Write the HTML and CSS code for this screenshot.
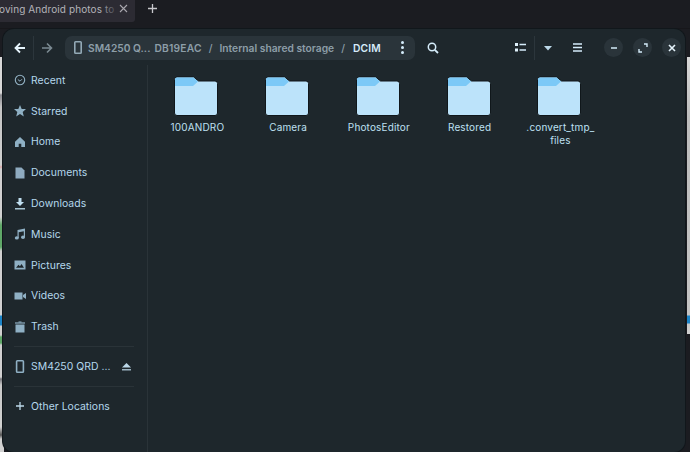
FILE: index.html
```html
<!DOCTYPE html>
<html lang="en">
<head>
<meta charset="utf-8">
<title>Files</title>
<link rel="stylesheet" href="styles.css">
</head>
<body>
<svg class="defs" width="0" height="0" aria-hidden="true">
  <symbol id="folder" viewBox="0.5 0 44 40">
    <path d="M1 3.500Q1 1 3.500 1H20L25 5H41.500Q44 5 44 7.500V37Q44 39.500 41.500 39.500H3.500Q1 39.500 1 37Z" fill="#bce3fa" stroke="#10171b" stroke-width="1"/>
    <path d="M1.500 3.500Q1.500 1.500 3.500 1.500H20L24.500 5.500L19.500 10H1.500Z" fill="#7cc9f7"/>
  </symbol>
</svg>

<div class="tabbar">
  <div class="tab">
    <span class="tab-title">oving Android photos to</span>
    <span class="tab-fade"></span>
    <svg class="tab-x" width="9" height="9" viewBox="0 0 9 9"><path d="M1 1L8 8M8 1L1 8" stroke="#a8a6ad" stroke-width="1.100"/></svg>
  </div>
  <svg class="tab-new" width="11" height="11" viewBox="0 0 11 11"><path d="M5.500 1V10M1 5.500H10" stroke="#c8c8cc" stroke-width="1.300"/></svg>
</div>

<div class="backdrop-left"></div>
<div class="backdrop-right"></div>

<main class="window">
  <header class="header">
    <div class="nav">
      <svg width="12" height="12" viewBox="0 0 12 12"><path d="M6 1.500L1.500 6L6 10.500M2 6H11" fill="none" stroke="#e6f4fc" stroke-width="1.800"/></svg>
      <span class="vsep"></span>
      <svg width="12" height="12" viewBox="0 0 12 12"><path d="M6 1.500L10.500 6L6 10.500M10 6H1" fill="none" stroke="#7b8a92" stroke-width="1.600"/></svg>
    </div>
    <div class="pathbar">
      <svg class="phone" width="8" height="13" viewBox="0 0 8 13"><rect x="0.800" y="0.800" width="6.400" height="11.400" rx="0.800" fill="none" stroke="#93a9b6" stroke-width="1.600"/></svg>
      <span class="crumb c1">SM4250 Q...</span>
      <span class="crumb c2">DB19EAC</span>
      <span class="slash">/</span>
      <span class="crumb">Internal shared storage</span>
      <span class="slash">/</span>
      <span class="crumb current">DCIM</span>
      <span class="dots"><i></i><i></i><i></i></span>
    </div>
    <svg class="search" width="12" height="12" viewBox="0 0 12 12"><circle cx="5" cy="5" r="3.700" fill="none" stroke="#d5ecfa" stroke-width="1.500"/><path d="M7.800 7.800L11 11" stroke="#d5ecfa" stroke-width="1.800"/></svg>
    <svg class="view" width="11" height="9" viewBox="0 0 11 9"><path d="M0 0H3V3H0ZM0 5.500H3V8.500H0Z" fill="#e0f1fb"/><path d="M4.500 1.500H11M4.500 7H11" stroke="#d5ecfa" stroke-width="1.400"/></svg>
    <span class="vsep tall"></span>
    <svg class="caret" width="8" height="5" viewBox="0 0 8 5"><path d="M0 0H8L4 4.500Z" fill="#bcd8e8"/></svg>
    <svg class="menu" width="9" height="9" viewBox="0 0 9 9"><path d="M0 1H9M0 4.500H9M0 8H9" stroke="#d5ecfa" stroke-width="1.500"/></svg>
    <div class="winbtns">
      <span class="wbtn"><svg width="8" height="8" viewBox="0 0 8 8"><path d="M1 4H7" stroke="#d5ecfa" stroke-width="1.500"/></svg></span>
      <span class="wbtn"><svg width="10" height="10" viewBox="0 0 10 10"><path d="M6 1H9V4M4 9H1V6" fill="none" stroke="#d5ecfa" stroke-width="1.400"/></svg></span>
      <span class="wbtn"><svg width="8" height="8" viewBox="0 0 8 8"><path d="M1 1L7 7M7 1L1 7" stroke="#e6f4fc" stroke-width="1.600"/></svg></span>
    </div>
  </header>

  <div class="body">
    <nav class="sidebar">
      <a class="place"><svg width="12" height="12" viewBox="0 0 12 12"><circle cx="6" cy="6" r="4.700" fill="none" stroke="#93b2c4" stroke-width="1.100"/><path d="M3.800 5.500L6 7.200L8 5.200" fill="none" stroke="#93b2c4"/></svg><span>Recent</span></a>
      <a class="place"><svg width="12" height="12" viewBox="0 0 12 12"><path d="M6 0L7.700 4H12L8.700 7L9.800 11.500L6 9.100L2.200 11.500L3.300 7L0 4H4.300Z" fill="#8fb0c4"/></svg><span>Starred</span></a>
      <a class="place"><svg width="12" height="12" viewBox="0 0 12 12"><path d="M6 1L11 5.800V11H7.300V7.800H4.700V11H1V5.800Z" fill="#8fb0c4"/></svg><span>Home</span></a>
      <a class="place"><svg width="12" height="12" viewBox="0 0 12 12"><path d="M1.500 0.500H7.500L10.500 3.500V11.500H1.500Z" fill="#8fabc0"/></svg><span>Documents</span></a>
      <a class="place"><svg width="12" height="12" viewBox="0 0 12 12"><path d="M4.500 0H7.500V4H10L6 8L2 4H4.500Z" fill="#c0dff0"/><path d="M1 10.800H11" stroke="#c0dff0" stroke-width="1.300"/></svg><span>Downloads</span></a>
      <a class="place"><svg width="12" height="12" viewBox="0 0 12 12"><path d="M3.500 2L11 0.500V9H9.800V3.300L4.700 4.300V10H3.500Z" fill="#8fb0c4"/><ellipse cx="2.800" cy="9.900" rx="2" ry="1.700" fill="#8fb0c4"/><ellipse cx="9" cy="9.300" rx="2" ry="1.700" fill="#8fb0c4"/></svg><span>Music</span></a>
      <a class="place"><svg width="12" height="12" viewBox="0 0 12 12"><path d="M0.500 1.500H11.500V10.500H0.500Z" fill="#8fb0c4"/><path d="M2 8.800L4.500 5.800L6 7.200L7.500 5L10 8.800Z" fill="#1e272c"/></svg><span>Pictures</span></a>
      <a class="place"><svg width="12" height="12" viewBox="0 0 12 12"><path d="M0.500 2.500H8.500V9.500H0.500ZM9 5L12 3V9L9 7Z" fill="#8fb0c4"/></svg><span>Videos</span></a>
      <a class="place"><svg width="12" height="12" viewBox="0 0 12 12"><path d="M1.500 3.500H10.500V11.500H1.500Z" fill="#8fb0c4"/><path d="M1 2H11" stroke="#8fb0c4" stroke-width="1.200"/><path d="M4.500 1H7.500" stroke="#8fb0c4"/></svg><span>Trash</span></a>
      <hr class="rule">
      <a class="place"><svg width="12" height="13" viewBox="0 0 12 13"><rect x="2.600" y="0.800" width="6.800" height="11.400" rx="0.800" fill="none" stroke="#8fb0c4" stroke-width="1.600"/></svg><span class="grow">SM4250 QRD ...</span><svg class="eject" width="9" height="8" viewBox="0 0 9 8"><path d="M4.500 0L9 4.500H0Z" fill="#bcd8e8"/><path d="M0 6.800H9" stroke="#bcd8e8" stroke-width="1.200"/></svg></a>
      <hr class="rule">
      <a class="place"><svg width="12" height="12" viewBox="0 0 12 12"><path d="M6 2V10M2 6H10" stroke="#bcd8e8" stroke-width="1.300"/></svg><span>Other Locations</span></a>
    </nav>
    <section class="files">
      <div class="item"><svg class="folder" width="44" height="40"><use href="#folder"/></svg><span>100ANDRO</span></div>
      <div class="item"><svg class="folder" width="44" height="40"><use href="#folder"/></svg><span>Camera</span></div>
      <div class="item"><svg class="folder" width="44" height="40"><use href="#folder"/></svg><span>PhotosEditor</span></div>
      <div class="item"><svg class="folder" width="44" height="40"><use href="#folder"/></svg><span>Restored</span></div>
      <div class="item"><svg class="folder" width="44" height="40"><use href="#folder"/></svg><span>.convert_tmp_<br>files</span></div>
    </section>
  </div>
</main>
```

FILE: styles.css
```css
* { box-sizing: border-box; }
html, body { margin: 0; height: 100%; }
body {
  width: 690px;
  height: 452px;
  overflow: hidden;
  position: relative;
  background: #1b1c21;
  font-family: Inter, "Noto Sans", sans-serif;
  color: #b9dcf0;
}
.defs { position: absolute; }

.tabbar { height: 29px; display: flex; align-items: flex-start; border-bottom: 1px solid #17171b; }
.tab {
  position: relative;
  flex: none;
  width: 135px;
  height: 22px;
  background: #2c2b33;
  border-bottom-right-radius: 3px;
  overflow: hidden;
  white-space: nowrap;
  font-size: 10px;
  line-height: 18px;
  color: #b4b3b9;
}
.tab-title { position: absolute; left: -1px; top: 0; letter-spacing: 0.100px; }
.tab-fade { position: absolute; left: 100px; top: 0; width: 16px; height: 22px; background: linear-gradient(90deg, rgba(44,43,51,0), rgba(44,43,51,0.85)); }
.tab-x { position: absolute; left: 119px; top: 4px; }
.tab-new { flex: none; margin: 3px 0 0 12px; }

.backdrop-left { position: absolute; left: 0; top: 57px; width: 4px; height: 395px;
  background: linear-gradient(180deg, #d8d8d8 0, #d8d8d8 36px, #8a8a90 38px, #c4c4c4 50px, #d0d0d0 108px, #d8a8a8 110px, #d0d0d0 112px, #d0d0d0 160px, #5fa868 168px, #5fa868 190px, #d0d0d0 194px, #d0d0d0 258px, #1b84c8 259px, #1b84c8 268px, #d0d0d0 269px, #d0d0d0 278px, #5fa868 280px, #5fa868 286px, #d0d0d0 288px, #d0d0d0 320px, #77777c 322px, #c8c8c8 328px, #d0d0d0 370px, #555 378px, #d0d0d0 382px); }
.backdrop-right { position: absolute; left: 687px; top: 57px; width: 3px; height: 277px;
  background: linear-gradient(180deg, #d8d8d8 0, #bdbdbd 60px, #c4c4c4 258px, #1b84c8 259px, #1b84c8 266px, #c8c8c8 267px, #d0d0d0 277px); }

.window {
  position: absolute;
  left: 3px;
  top: 29px;
  width: 682px;
  height: 423px;
  background: #1e272c;
  border-radius: 11px;
  box-shadow: 0 0 0 1px #11171b;
  display: flex;
  flex-direction: column;
}

.header { height: 36px; flex: none; display: flex; align-items: center; padding-top: 1px; }
.nav { display: flex; align-items: center; margin-left: 11px; width: 50px; }
.vsep { display: block; width: 1px; height: 24px; background: #2c363c; margin: 0 7px 0 7px; }
.pathbar {
  width: 350px;
  height: 24px;
  background: #2a343a;
  border-radius: 7px;
  display: flex;
  align-items: center;
  font-size: 10.250px;
  font-weight: 600;
  color: #8d9ea8;
  white-space: nowrap;
  padding-left: 9px;
  margin-left: 1px;
}
.phone { margin-right: 6px; flex: none; }
.crumb { display: block; }
.c1 { margin-right: 4px; }
.c2 { letter-spacing: 0.200px; }
.slash { margin: 0 7px; font-weight: 500; }
.current { color: #d5ecfa; letter-spacing: 0.200px; margin-left: 1px; }
.dots { display: flex; flex-direction: column; gap: 2px; margin-left: auto; margin-right: 11px; }
.dots i { display: block; width: 3px; height: 3px; border-radius: 50%; background: #d5ecfa; }
.search { margin-left: 12px; flex: none; }
.view { margin-left: 76px; flex: none; }
.vsep.tall { margin: 0 9px 0 8px; }
.caret { flex: none; margin-top: 1px; }
.menu { margin-left: 21px; flex: none; }
.winbtns { display: flex; gap: 10px; margin-left: 22px; }
.wbtn { width: 19px; height: 19px; border-radius: 50%; background: #2a343a; display: flex; align-items: center; justify-content: center; }

.body { flex: 1; display: flex; min-height: 0; }
.sidebar { width: 145px; flex: none; border-right: 1px solid #2a3338; padding: 0 13px 0 11px; font-size: 10.400px; letter-spacing: 0.050px; }
.place { display: flex; align-items: center; height: 30.800px; color: #b5d8ec; white-space: nowrap; }
.place > svg:first-child { flex: none; margin-right: 5px; }
.grow { flex: 1; }
.eject { margin-right: 3px; }
.rule { border: 0; height: 1px; background: #2a3338; margin: 4px 0 4px 0; }

.files { flex: 1; display: flex; align-items: flex-start; padding: 11px 0 0 4px; }
.item { width: 90.750px; display: flex; flex-direction: column; align-items: center; font-size: 10px; line-height: 13px; color: #bfe0f2; text-align: center; letter-spacing: 0.150px; }
.folder { display: block; margin: 0 2px 5px 0; }
```
